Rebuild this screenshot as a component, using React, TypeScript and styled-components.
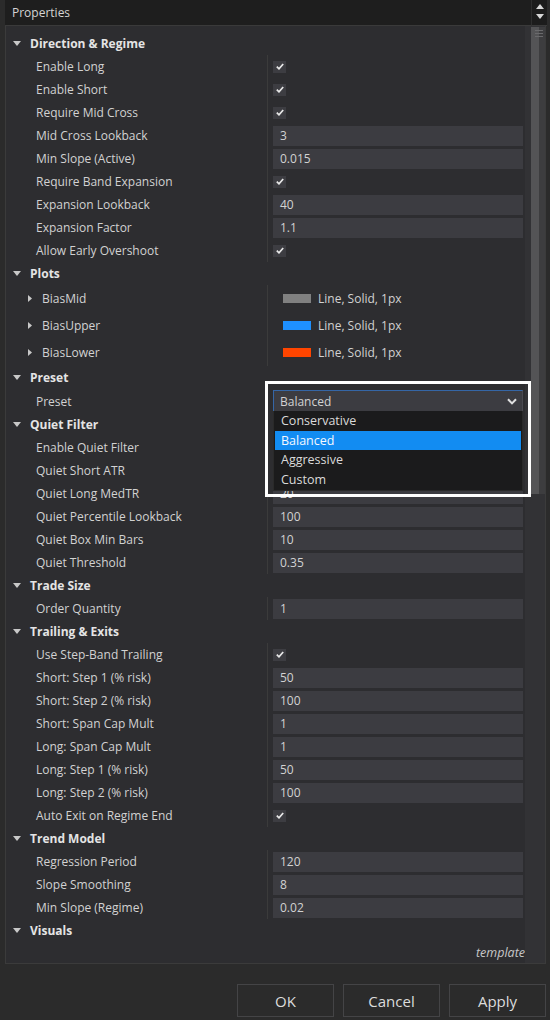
import React from "react";
import styled, { createGlobalStyle } from "styled-components";

type Field =
  | { kind: "check"; label: string }
  | { kind: "text"; label: string; value: string }
  | { kind: "plot"; label: string; color: string }
  | { kind: "select"; label: string; value: string; options: string[] };

interface SectionData {
  title: string;
  fields: Field[];
}

const sections: SectionData[] = [
  {
    title: "Direction & Regime",
    fields: [
      { kind: "check", label: "Enable Long" },
      { kind: "check", label: "Enable Short" },
      { kind: "check", label: "Require Mid Cross" },
      { kind: "text", label: "Mid Cross Lookback", value: "3" },
      { kind: "text", label: "Min Slope (Active)", value: "0.015" },
      { kind: "check", label: "Require Band Expansion" },
      { kind: "text", label: "Expansion Lookback", value: "40" },
      { kind: "text", label: "Expansion Factor", value: "1.1" },
      { kind: "check", label: "Allow Early Overshoot" },
    ],
  },
  {
    title: "Plots",
    fields: [
      { kind: "plot", label: "BiasMid", color: "#808080" },
      { kind: "plot", label: "BiasUpper", color: "#1e90ff" },
      { kind: "plot", label: "BiasLower", color: "#ff4500" },
    ],
  },
  {
    title: "Preset",
    fields: [
      {
        kind: "select",
        label: "Preset",
        value: "Balanced",
        options: ["Conservative", "Balanced", "Aggressive", "Custom"],
      },
    ],
  },
  {
    title: "Quiet Filter",
    fields: [
      { kind: "check", label: "Enable Quiet Filter" },
      { kind: "text", label: "Quiet Short ATR", value: "14" },
      { kind: "text", label: "Quiet Long MedTR", value: "20" },
      { kind: "text", label: "Quiet Percentile Lookback", value: "100" },
      { kind: "text", label: "Quiet Box Min Bars", value: "10" },
      { kind: "text", label: "Quiet Threshold", value: "0.35" },
    ],
  },
  {
    title: "Trade Size",
    fields: [{ kind: "text", label: "Order Quantity", value: "1" }],
  },
  {
    title: "Trailing & Exits",
    fields: [
      { kind: "check", label: "Use Step-Band Trailing" },
      { kind: "text", label: "Short: Step 1 (% risk)", value: "50" },
      { kind: "text", label: "Short: Step 2 (% risk)", value: "100" },
      { kind: "text", label: "Short: Span Cap Mult", value: "1" },
      { kind: "text", label: "Long: Span Cap Mult", value: "1" },
      { kind: "text", label: "Long: Step 1 (% risk)", value: "50" },
      { kind: "text", label: "Long: Step 2 (% risk)", value: "100" },
      { kind: "check", label: "Auto Exit on Regime End" },
    ],
  },
  {
    title: "Trend Model",
    fields: [
      { kind: "text", label: "Regression Period", value: "120" },
      { kind: "text", label: "Slope Smoothing", value: "8" },
      { kind: "text", label: "Min Slope (Regime)", value: "0.02" },
    ],
  },
  { title: "Visuals", fields: [] },
];

const rowHeight = (kind: Field["kind"]) =>
  kind === "plot" ? 27 : kind === "select" ? 24 : 23;

const GlobalStyle = createGlobalStyle`
  html, body {
    margin: 0;
    padding: 0;
    background: #2b2b2b;
  }
  body {
    font-family: "Open Sans", "Noto Sans", sans-serif;
    font-size: 12px;
    color: #d2d2d2;
  }
  * {
    box-sizing: border-box;
  }
`;

const Caret = ({ dir }: { dir: "down" | "right" }) =>
  dir === "down" ? (
    <svg width="8" height="5" viewBox="0 0 8 5">
      <polygon points="0,0 8,0 4,5" fill="#c8c8c8" />
    </svg>
  ) : (
    <svg width="4" height="7" viewBox="0 0 4 7">
      <polygon points="0,0 4,3.5 0,7" fill="#c8c8c8" />
    </svg>
  );

const CheckMark = () => (
  <svg width="8" height="7" viewBox="0 0 8 7">
    <path d="M0.8 3.6 L3 5.8 L7.2 1" stroke="#e8e8e8" strokeWidth="1.7" fill="none" />
  </svg>
);

const Chevron = () => (
  <svg width="10" height="7" viewBox="0 0 10 7">
    <path d="M1 1.2 L5 5.4 L9 1.2" stroke="#e0e0e0" strokeWidth="2" fill="none" />
  </svg>
);

export default function App() {
  return (
    <Window>
      <GlobalStyle />
      <TitleRow>
        <Title>Properties</Title>
        <ArrowBox>
          <svg width="8" height="5" viewBox="0 0 8 5">
            <polygon points="0,5 8,5 4,0" fill="#d8d8d8" />
          </svg>
          <svg width="8" height="5" viewBox="0 0 8 5">
            <polygon points="0,0 8,0 4,5" fill="#d8d8d8" />
          </svg>
        </ArrowBox>
      </TitleRow>
      <Panel>
        <PropList>
          {sections.map((s) => (
            <div key={s.title}>
              <SectionHeader>
                <Caret dir="down" />
                {s.title}
              </SectionHeader>
              {s.fields.map((f) => (
                <Row key={f.label} h={rowHeight(f.kind)}>
                  {f.kind === "plot" ? (
                    <PlotLabel>
                      <Caret dir="right" />
                      {f.label}
                    </PlotLabel>
                  ) : (
                    <Label>{f.label}</Label>
                  )}
                  <Value>
                    {f.kind === "check" && (
                      <CheckBox>
                        <CheckMark />
                      </CheckBox>
                    )}
                    {f.kind === "text" && <Input>{f.value}</Input>}
                    {f.kind === "plot" && (
                      <>
                        <Swatch color={f.color} />
                        <span>Line, Solid, 1px</span>
                      </>
                    )}
                    {f.kind === "select" && (
                      <>
                        <Select>
                          {f.value}
                          <Chevron />
                        </Select>
                        <Popup>
                          {f.options.map((o) => (
                            <Option key={o} active={o === f.value}>
                              {o}
                            </Option>
                          ))}
                        </Popup>
                        <Highlight />
                      </>
                    )}
                  </Value>
                </Row>
              ))}
            </div>
          ))}
          <Template>template</Template>
        </PropList>
        <ScrollTrack>
          <Thumb>
            <Grip />
            <Grip />
            <Grip />
          </Thumb>
        </ScrollTrack>
      </Panel>
      <Footer>
        <Button>OK</Button>
        <Button>Cancel</Button>
        <Button>Apply</Button>
      </Footer>
    </Window>
  );
}

const Window = styled.div`
  width: 550px;
  height: 1020px;
  display: flex;
  flex-direction: column;
  padding: 0 4px 0 5px;
  background: #2b2b2b;
`;

const TitleRow = styled.div`
  display: flex;
  height: 26px;
  flex-shrink: 0;
`;

const Title = styled.div`
  flex: 1;
  background: #1e1e1e;
  padding-left: 7px;
  line-height: 26px;
  color: #d4d4d4;
  border-bottom: 1px solid #3a3a3a;
`;

const ArrowBox = styled.div`
  width: 16px;
  margin-right: -1px;
  background: #1c1c1c;
  border-left: 1px solid #2e2e2e;
  border-bottom: 1px solid #3a3a3a;
  display: flex;
  flex-direction: column;
  align-items: center;
  justify-content: space-between;
  padding: 4px 0 6px;
`;

const Panel = styled.div`
  height: 938px;
  display: flex;
  border: 1px solid #3b3b3b;
  border-top: none;
  background: #2d2d30;
`;

const PropList = styled.div`
  flex: 1;
  padding-top: 6px;
  display: flex;
  flex-direction: column;
`;

const SectionHeader = styled.div`
  height: 23px;
  display: flex;
  align-items: center;
  gap: 9px;
  padding-left: 7px;
  font-weight: 700;
  color: #e4e4e4;
`;

const Row = styled.div<{ h: number }>`
  height: ${(p) => p.h}px;
  display: grid;
  grid-template-columns: 261px 1fr;
  align-items: center;
`;

const Label = styled.div`
  padding-left: 30px;
  white-space: nowrap;
`;

const PlotLabel = styled.div`
  display: flex;
  align-items: center;
  gap: 10px;
  padding-left: 22px;
`;

const Value = styled.div`
  position: relative;
  height: 100%;
  display: flex;
  align-items: center;
  border-left: 1px solid #3b3b3b;
  padding: 0 2px 0 5px;
`;

const CheckBox = styled.div`
  width: 13px;
  height: 12px;
  background: #3d3d42;
  display: flex;
  align-items: center;
  justify-content: center;
`;

const Input = styled.div`
  flex: 1;
  height: 20px;
  line-height: 20px;
  background: #3c3c41;
  padding-left: 7px;
`;

const Swatch = styled.div<{ color: string }>`
  width: 28px;
  height: 9px;
  margin: 0 7px 0 10px;
  background: ${(p) => p.color};
`;

const Select = styled.div`
  flex: 1;
  height: 22px;
  background: #3c3c41;
  border: 1px solid #3566a6;
  border-right-color: #4a4a50;
  padding: 0 5px 0 6px;
  display: flex;
  align-items: center;
  justify-content: space-between;
`;

const Popup = styled.div`
  position: absolute;
  z-index: 2;
  top: 22px;
  left: 5px;
  right: 2px;
  background: #1b1b1c;
  padding: 0 1px 1px;
  border: 1px solid #2a2a2a;
  border-top: none;
`;

const Option = styled.div<{ active?: boolean }>`
  height: 19.5px;
  line-height: 19.5px;
  padding-left: 6px;
  font-size: 12.5px;
  color: ${(p) => (p.active ? "#f4f8ff" : "#dadada")};
  background: ${(p) => (p.active ? "#128cf2" : "transparent")};
`;

const Highlight = styled.div`
  position: absolute;
  z-index: 3;
  top: -8px;
  left: -3px;
  width: 266px;
  height: 116px;
  border: 3px solid #ffffff;
  pointer-events: none;
`;

const Template = styled.div`
  height: 19px;
  line-height: 19px;
  margin-top: 1px;
  text-align: right;
  font-style: italic;
  font-size: 12.5px;
  color: #c8c8c8;
`;

const ScrollTrack = styled.div`
  width: 20px;
  background: #323235;
  padding: 1px 0 0 6px;
`;

const Thumb = styled.div`
  width: 14px;
  height: 467px;
  background: linear-gradient(to right, #545456 0, #545456 8px, #3d3d3f 8px);
  padding: 3px 2px 0 4px;
  display: flex;
  flex-direction: column;
  gap: 2px;
`;

const Grip = styled.div`
  height: 1px;
  background: #6a6a6c;
`;

const Footer = styled.div`
  flex: 1;
  display: flex;
  justify-content: flex-end;
  align-items: flex-start;
  gap: 9px;
  padding-top: 20px;
`;

const Button = styled.div`
  width: 97px;
  height: 33px;
  border: 1px solid #444446;
  background: #2b2b2b;
  color: #dcdcdc;
  font-size: 15px;
  display: flex;
  align-items: center;
  justify-content: center;
`;
